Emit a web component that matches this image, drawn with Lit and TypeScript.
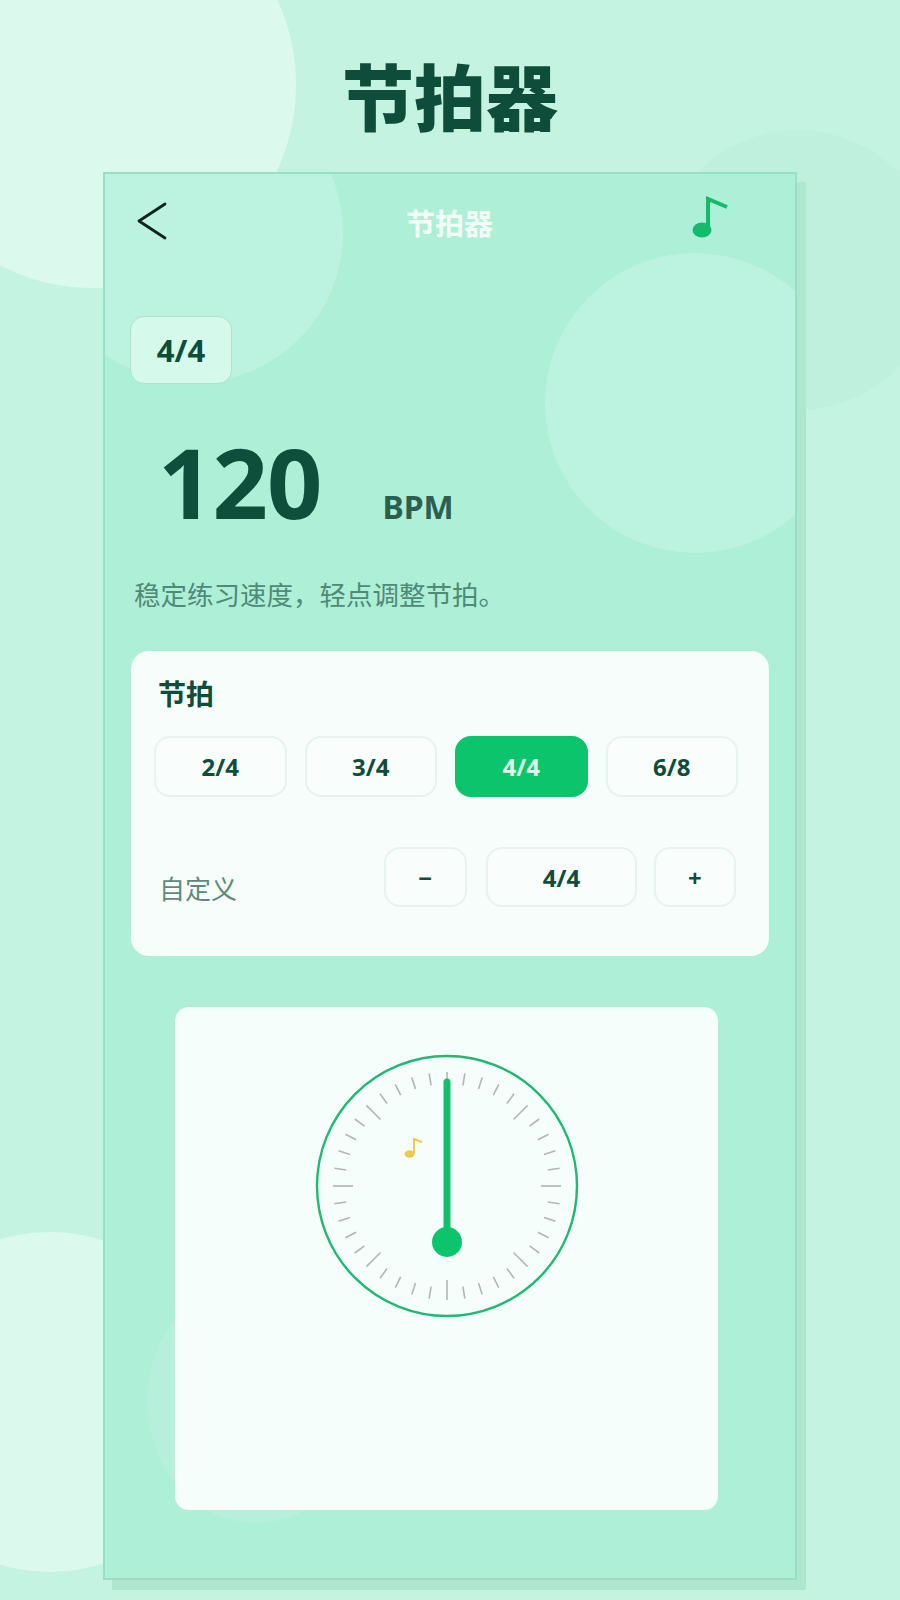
import { LitElement, css, html, svg } from 'lit';
import { customElement } from 'lit/decorators.js';

const SIGNATURES = ['2/4', '3/4', '4/4', '6/8'];

@customElement('app-root')
export class AppRoot extends LitElement {
  static styles = css`
    :host {
      display: block;
      position: relative;
      width: 900px;
      height: 1600px;
      overflow: hidden;
      background: #c5f3e2;
      font-family: "Noto Sans", "Noto Sans CJK SC", sans-serif;
      color: #0e4d39;
    }
    .blob {
      position: absolute;
      border-radius: 50%;
    }
    .page-a { left: -110px; top: -118px; width: 406px; height: 406px; background: #dcf9ed; }
    .page-b { left: 658px; top: 130px; width: 280px; height: 280px; background: #bfefdd; }
    .page-c { left: -120px; top: 1232px; width: 340px; height: 340px; background: #dcf9ed; }
    .frame-a { left: -62px; top: -91px; width: 300px; height: 300px; background: #bcf3e0; }
    .frame-b { left: 440px; top: 79px; width: 300px; height: 300px; background: #bcf3e0; }
    .frame-c { left: 42px; top: 1105px; width: 218px; height: 244px; background: #b6f0dd; }

    .title {
      position: relative;
      margin: 0;
      height: 172px;
      box-sizing: border-box;
      padding-top: 48px;
      text-align: center;
      font-size: 72px;
      line-height: 92px;
      font-weight: 900;
      font-family: "Noto Sans CJK SC", sans-serif;
    }
    .frame {
      position: relative;
      overflow: hidden;
      box-sizing: border-box;
      width: 694px;
      height: 1408px;
      margin-left: 103px;
      border: 2px solid #98e0c5;
      background: #aeefd8;
      box-shadow: 9px 10px 0 #aee6d0;
    }
    .content {
      position: relative;
      display: flex;
      flex-direction: column;
      margin: -1px 0 0 -1px;
    }
    .bar {
      display: grid;
      grid-template-columns: 1fr auto 1fr;
      grid-template-rows: 42px;
      align-items: center;
      height: 42px;
      margin-top: 23px;
      padding: 0 33px;
    }
    .back { margin-top: 8px; }
    .bar-title {
      margin-top: 10px;
      font-family: "Noto Sans CJK SC", sans-serif;
      font-size: 29px;
      font-weight: 700;
      color: #f2fdf8;
    }
    .bar .note { justify-self: end; margin-right: 34px; }
    .tag {
      display: flex;
      align-items: center;
      justify-content: center;
      box-sizing: border-box;
      width: 102px;
      height: 68px;
      margin: 78px 0 0 26px;
      border: 1px solid #aee2cd;
      border-radius: 14px;
      background: #d5f9ea;
      font-size: 31px;
      font-weight: 700;
    }
    .tempo {
      display: flex;
      align-items: baseline;
      gap: 61px;
      margin: 30px 0 0 54px;
      height: 134px;
    }
    .bpm-value {
      font-size: 97px;
      line-height: 134px;
      font-weight: 700;
      letter-spacing: -1px;
      color: #0d4f3a;
    }
    .bpm-unit {
      font-size: 32px;
      font-weight: 700;
      color: #2d5f50;
    }
    .hint {
      margin: 0 0 0 30px;
      padding-top: 28px;
      font-family: "Noto Sans CJK SC", sans-serif;
      font-size: 26.5px;
      line-height: 36px;
      color: #4f8a77;
    }
    .panel {
      box-sizing: border-box;
      width: 638px;
      height: 305px;
      margin: 39px 0 0 27px;
      padding: 22px 31px 0 23px;
      border-radius: 18px;
      background: #f6fdfb;
    }
    .panel-title {
      margin: 0 0 0 4px;
      font-family: "Noto Sans CJK SC", sans-serif;
      font-size: 28px;
      line-height: 40px;
      font-weight: 700;
    }
    .signatures {
      display: grid;
      grid-template-columns: repeat(4, 132.5px);
      column-gap: 18px;
      margin-top: 23px;
    }
    .btn {
      display: flex;
      align-items: center;
      justify-content: center;
      box-sizing: border-box;
      border: 2px solid #e8f2ef;
      border-radius: 16px;
      background: #f9fdfc;
      font-weight: 700;
      font-size: 24px;
      height: 61px;
    }
    .btn.active {
      border-color: #0cc46b;
      background: #0cc46b;
      color: #dcf9ec;
    }
    .custom {
      display: flex;
      align-items: flex-start;
      margin-top: 50px;
      padding-right: 2px;
    }
    .custom-label {
      margin: 25px auto 0 5px;
      font-family: "Noto Sans CJK SC", sans-serif;
      font-size: 26px;
      line-height: 32px;
      color: #5e8a7b;
    }
    .custom .btn { height: 60px; }
    .step { width: 82.5px; }
    .value { width: 151px; margin: 0 16.5px 0 19.5px; }
    .dial-card {
      display: flex;
      justify-content: center;
      box-sizing: border-box;
      width: 543px;
      height: 503px;
      margin: 51px 0 0 71px;
      padding-top: 47px;
      border-radius: 14px;
      background: #f6fefb;
    }
    .dial { display: block; }
  `;

  private ticks() {
    // 40 ticks, every fifth one longer
    return Array.from({ length: 40 }, (_, i) => {
      const a = (i * 9 * Math.PI) / 180;
      const inner = i % 5 === 0 ? 94 : 102;
      const x1 = 132 + Math.sin(a) * inner;
      const y1 = 132 - Math.cos(a) * inner;
      const x2 = 132 + Math.sin(a) * 114;
      const y2 = 132 - Math.cos(a) * 114;
      return svg`<line x1=${x1} y1=${y1} x2=${x2} y2=${y2} stroke="#b0b6b4" stroke-width="1.6"></line>`;
    });
  }

  render() {
    return html`
      <div class="blob page-a"></div>
      <div class="blob page-b"></div>
      <div class="blob page-c"></div>
      <h1 class="title">节拍器</h1>
      <div class="frame">
        <div class="blob frame-a"></div>
        <div class="blob frame-b"></div>
        <div class="blob frame-c"></div>
        <div class="content">
          <div class="bar">
            <svg class="back" width="30" height="38" viewBox="0 0 30 38" fill="none">
              <path d="M28 2 L2 19 L28 36" stroke="#10241d" stroke-width="2.8" stroke-linecap="round" stroke-linejoin="round"></path>
            </svg>
            <span class="bar-title">节拍器</span>
            <svg class="note" width="36" height="42" viewBox="0 0 36 42" fill="none">
              <path d="M16 34 V3 L35 11" stroke="#14bb6c" stroke-width="4"></path>
              <ellipse cx="10" cy="34" rx="9.5" ry="7.5" fill="#14bb6c"></ellipse>
            </svg>
          </div>
          <div class="tag">4/4</div>
          <div class="tempo">
            <span class="bpm-value">120</span>
            <span class="bpm-unit">BPM</span>
          </div>
          <p class="hint">稳定练习速度，轻点调整节拍。</p>
          <div class="panel">
            <h2 class="panel-title">节拍</h2>
            <div class="signatures">
              ${SIGNATURES.map((s) => html`<div class="btn ${s === '4/4' ? 'active' : ''}">${s}</div>`)}
            </div>
            <div class="custom">
              <span class="custom-label">自定义</span>
              <div class="btn step">−</div>
              <div class="btn value">4/4</div>
              <div class="btn step">+</div>
            </div>
          </div>
          <div class="dial-card">
            <svg class="dial" width="264" height="264" viewBox="0 0 264 264" fill="none">
              <circle cx="132" cy="132" r="130" stroke="#1fb874" stroke-width="2.4"></circle>
              ${this.ticks()}
              <path d="M99 100 V85 L107 88" stroke="#edca55" stroke-width="2" fill="none"></path>
              <ellipse cx="94.5" cy="100" rx="5" ry="3.8" fill="#edca55"></ellipse>
              <line x1="132" y1="28" x2="132" y2="188" stroke="#12bf6a" stroke-width="7" stroke-linecap="round"></line>
              <circle cx="132" cy="188" r="15" fill="#0cc46b"></circle>
            </svg>
          </div>
        </div>
      </div>
    `;
  }
}
